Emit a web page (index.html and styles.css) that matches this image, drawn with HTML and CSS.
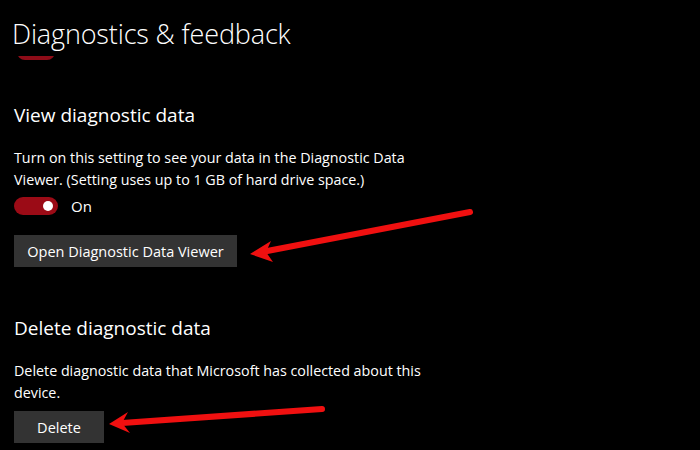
FILE: index.html
```html
<!DOCTYPE html>
<html>
<head>
<meta charset="utf-8">
<link rel="stylesheet" href="styles.css">
</head>
<body>
<div class="page">
  <h1 class="title">Diagnostics &amp; feedback</h1>
  <div class="prev-toggle"></div>

  <section class="section first">
    <h2 class="heading">View diagnostic data</h2>
    <p class="desc">Turn on this setting to see your data in the Diagnostic Data Viewer. (Setting uses up to 1 GB of hard drive space.)</p>
    <div class="toggle-row">
      <span class="toggle"><span class="knob"></span></span>
      <span class="toggle-label">On</span>
    </div>
    <button class="btn">Open Diagnostic Data Viewer</button>
  </section>

  <section class="section second">
    <h2 class="heading">Delete diagnostic data</h2>
    <p class="desc">Delete diagnostic data that Microsoft has collected about this device.</p>
    <button class="btn btn-small">Delete</button>
  </section>

  <svg class="arrows" width="700" height="450" viewBox="0 0 700 450">
    <g stroke="#f01010" stroke-width="6" stroke-linecap="round" fill="none">
      <line x1="470" y1="212" x2="262" y2="252"/>
      <line x1="322" y1="409" x2="122" y2="423"/>
    </g>
    <g fill="#f01010">
      <polygon points="250,254 271,241 266,252 273,262"/>
      <polygon points="109,424 128,412 122,423 130,433"/>
    </g>
  </svg>
</div>
</body>
</html>
```

FILE: styles.css
```css
html, body {
  margin: 0;
  padding: 0;
  background: #000;
}
.page {
  position: relative;
  width: 700px;
  height: 450px;
  overflow: hidden;
  background: #000;
  color: #fff;
  font-family: "Open Sans", "Noto Sans", sans-serif;
  padding-left: 14px;
  box-sizing: border-box;
}
.title {
  margin: 0;
  padding-top: 14px;
  font-size: 27px;
  font-weight: 300;
  line-height: 40px;
  letter-spacing: -0.15px;
  margin-left: -2px;
}
.prev-toggle {
  width: 38px;
  height: 10px;
  margin-left: 3px;
  margin-top: -4px;
  border-radius: 0 0 8px 8px;
  background: #8e0c18;
  clip-path: inset(6px 0 0 0);
}
.section.first {
  margin-top: 42px;
}
.section.second {
  margin-top: 48px;
}
.heading {
  margin: 0;
  font-size: 19px;
  font-weight: 400;
  line-height: 26px;
}
.desc {
  margin: 19px 0 0;
  width: 430px;
  font-size: 14.3px;
  line-height: 22px;
}
.second .desc {
  margin-top: 19px;
}
.toggle-row {
  display: flex;
  align-items: center;
  gap: 13px;
  margin-top: 4px;
  height: 22px;
}
.toggle {
  width: 44px;
  height: 18px;
  border-radius: 9px;
  background: #9b0b16;
  display: flex;
  align-items: center;
  justify-content: flex-end;
  padding-right: 5px;
  box-sizing: border-box;
}
.knob {
  width: 10px;
  height: 10px;
  border-radius: 50%;
  background: #fff;
}
.toggle-label {
  font-size: 15px;
}
.btn {
  display: block;
  margin-top: 18px;
  height: 32px;
  width: 223px;
  border: none;
  background: #333;
  color: #fff;
  font-family: "Open Sans", "Noto Sans", sans-serif;
  font-size: 14.5px;
  padding: 0;
}
.btn-small {
  width: 90px;
  margin-top: 7px;
}
.arrows {
  position: absolute;
  left: 0;
  top: 0;
  pointer-events: none;
}
```
